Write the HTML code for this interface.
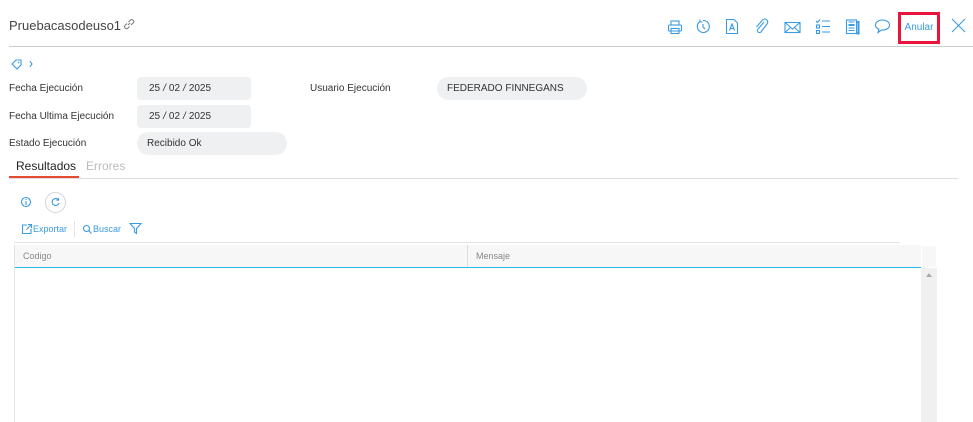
<!DOCTYPE html>
<html><head><meta charset="utf-8"><style>
*{box-sizing:border-box;margin:0;padding:0}
body{width:973px;height:422px;background:#fff;font-family:"Liberation Sans",sans-serif;position:relative;overflow:hidden;color:#333}
.a{position:absolute}
.lbl{font-size:10px;color:#333}
.fld{background:#eef0f2;font-size:10px;color:#333;border-radius:4px}
.fld i{font-style:italic;margin:0 3px}
svg{position:absolute}
.ic{stroke:#3a9be0;fill:none;stroke-width:1.1}
</style></head><body>
<div class="a" style="left:9px;top:18px;font-size:13px;color:#444;letter-spacing:0px">Pruebacasodeuso1</div>
<svg style="left:122px;top:17px" width="14" height="14" viewBox="0 0 14 14"><path d="M6 8 L8 6 M5 6.5 L3 8.5 a2 2 0 0 0 2.8 2.8 L7.5 9.5 M6.5 5 L8.5 3 a2 2 0 0 1 2.8 2.8 L9 8" stroke="#777" fill="none" stroke-width="1"/></svg>
<div class="a" style="left:9px;top:46px;width:964px;height:1px;background:#ccc"></div>

<svg style="left:667px;top:19px" width="16" height="16" viewBox="0 0 16 16"><rect class="ic" x="4" y="2" width="8" height="4"/><rect class="ic" x="1.5" y="6" width="13" height="6" rx="1"/><rect class="ic" x="4" y="9.5" width="8" height="5"/></svg>
<svg style="left:695px;top:18px" width="16" height="17" viewBox="0 0 16 17"><path class="ic" d="M5 3.5 A6 6 0 1 0 8 2.5 M5 1.5 L5 4 L7.5 4 M8 6 L8 9 L10 11"/></svg>
<svg style="left:725px;top:18px" width="14" height="17" viewBox="0 0 14 17"><path class="ic" d="M1.5 1.5 H9 L12.5 5 V15.5 H1.5 Z"/><path class="ic" d="M4.5 12.5 L7 6 L9.5 12.5 M5.5 10.5 H8.5"/></svg>
<svg style="left:754px;top:18px" width="16" height="17" viewBox="0 0 16 17"><path class="ic" d="M10 4 L4 11 a2 2 0 0 0 3 3 L13 6 a3 3 0 0 0 -4.5 -4 L2.5 9"/></svg>
<svg style="left:784px;top:21px" width="17" height="13" viewBox="0 0 17 13"><rect class="ic" x="1" y="1.5" width="15" height="10"/><path class="ic" d="M1 1.5 L8.5 8 L16 1.5 M1 11.5 L6.5 6.5 M16 11.5 L10.5 6.5"/></svg>
<svg style="left:815px;top:18px" width="16" height="17" viewBox="0 0 16 17"><path class="ic" d="M1 3 L2.5 4.5 L5 1.5 M7 3 H15 M7 8.5 H15 M7 14 H15"/><rect class="ic" x="1.5" y="7" width="3" height="3"/><rect class="ic" x="1.5" y="12.5" width="3" height="3"/></svg>
<svg style="left:845px;top:18px" width="15" height="17" viewBox="0 0 15 17"><rect class="ic" x="1.5" y="2" width="10" height="13.5"/><path d="M11.5 4 H13.5 V15.5 H11.5" stroke="#3a9be0" stroke-width="2" fill="none"/><rect x="3.5" y="6" width="6" height="2" fill="#3a9be0"/><path class="ic" d="M3.5 10 H9.5 M3.5 12.5 H9.5 M3.5 4 H9.5"/></svg>
<svg style="left:874px;top:18px" width="17" height="16" viewBox="0 0 17 16"><path class="ic" d="M8.5 2 C4.5 2 1.5 4.3 1.5 7 C1.5 9 3 10.5 5 11.3 L4 14.5 L7.5 12 C12.5 12.3 15.5 10 15.5 7 C15.5 4.3 12.5 2 8.5 2 Z"/></svg>
<div class="a" style="left:898px;top:12px;width:42px;height:32px;border:3px solid #e8143c;font-size:10px;color:#3a9be0;line-height:26px;text-align:center">Anular</div>
<svg style="left:951px;top:18px" width="15" height="15" viewBox="0 0 15 15"><path d="M1 1 L14 14 M14 1 L1 14" stroke="#3a9be0" stroke-width="1.1"/></svg>

<svg style="left:10px;top:58px" width="26" height="12" viewBox="0 0 26 12"><path class="ic" d="M2 6 L6 2 H11 V7 L7 11 Z"/><circle cx="8.5" cy="4.5" r="0.8" fill="#3a9be0"/><path class="ic" d="M20 3 L22 6 L20 9"/></svg>

<div class="a lbl" style="left:9px;top:83px">Fecha Ejecución</div>
<div class="a fld" style="left:137px;top:77px;width:114px;height:23px;line-height:23px;padding-left:12px">25<i>/</i>02<i>/</i>2025</div>
<div class="a lbl" style="left:9px;top:111px">Fecha Ultima Ejecución</div>
<div class="a fld" style="left:137px;top:105px;width:114px;height:23px;line-height:23px;padding-left:12px">25<i>/</i>02<i>/</i>2025</div>
<div class="a lbl" style="left:9px;top:138px">Estado Ejecución</div>
<div class="a fld" style="left:137px;top:132px;width:150px;height:23px;line-height:23px;padding-left:10px;border-radius:12px">Recibido Ok</div>
<div class="a lbl" style="left:310px;top:83px">Usuario Ejecución</div>
<div class="a fld" style="left:437px;top:77px;width:150px;height:23px;line-height:23px;padding-left:10px;border-radius:12px">FEDERADO FINNEGANS</div>

<div class="a" style="left:16px;top:159px;font-size:12px;color:#222">Resultados</div>
<div class="a" style="left:86px;top:159px;font-size:12px;color:#bbb">Errores</div>
<div class="a" style="left:9px;top:178px;width:949px;height:1px;background:#ddd"></div>
<div class="a" style="left:9px;top:176px;width:70px;height:2px;background:#e54b2e"></div>

<svg style="left:20px;top:196px" width="12" height="12" viewBox="0 0 12 12"><circle class="ic" cx="6" cy="6" r="4.5"/><path class="ic" d="M6 5 V9"/><circle cx="6" cy="3.5" r="0.6" fill="#3a9be0"/></svg>
<div class="a" style="left:45px;top:192px;width:21px;height:21px;border-radius:50%;border:1px solid #d4d4d4"></div>
<svg style="left:50px;top:197px" width="11" height="11" viewBox="0 0 11 11"><path class="ic" d="M8.5 3 A3.5 3.5 0 1 0 9 6 M8.5 1 V3.2 H6.5"/></svg>

<svg style="left:21px;top:223px" width="12" height="12" viewBox="0 0 12 12"><path class="ic" d="M6 2 H1.5 V10.5 H10 V6 M7 1.5 H10.5 V5 M10.5 1.5 L5.5 6.5"/></svg>
<div class="a" style="left:33px;top:224px;font-size:9px;color:#3a9be0">Exportar</div>
<div class="a" style="left:74px;top:221px;width:1px;height:16px;background:#e4e4e4"></div>
<svg style="left:82px;top:224px" width="11" height="11" viewBox="0 0 11 11"><circle class="ic" cx="4.5" cy="4.5" r="3"/><path class="ic" d="M6.7 6.7 L9.5 9.5" stroke-width="1.5"/></svg>
<div class="a" style="left:93px;top:224px;font-size:9px;color:#3a9be0">Buscar</div>
<svg style="left:129px;top:222px" width="13" height="13" viewBox="0 0 13 13"><path class="ic" d="M1 1.5 H12 L7.5 6.5 V11.5 L5.5 10 V6.5 Z"/></svg>

<div class="a" style="left:14px;top:242px;width:886px;height:1px;background:#e4e4e4"></div>
<div class="a" style="left:14px;top:245px;width:907px;height:23px;background:#f7f7f7;border-bottom:1px solid #29b6e8"></div>
<div class="a" style="left:14px;top:245px;width:1px;height:177px;background:#e4e4e4"></div>
<div class="a" style="left:23px;top:251px;font-size:9px;color:#888">Codigo</div>
<div class="a" style="left:467px;top:245px;width:1px;height:22px;background:#ddd"></div>
<div class="a" style="left:476px;top:251px;font-size:9px;color:#888">Mensaje</div>
<div class="a" style="left:921px;top:245px;width:16px;height:177px;background:#f0f0f0"></div>
<div class="a" style="left:921px;top:245px;width:16px;height:23px;background:#f7f7f7;border:1px solid #fff"></div>
<div class="a" style="left:926px;top:273px;width:0;height:0;border-left:3px solid transparent;border-right:3px solid transparent;border-bottom:4px solid #aaa"></div>
</body></html>
